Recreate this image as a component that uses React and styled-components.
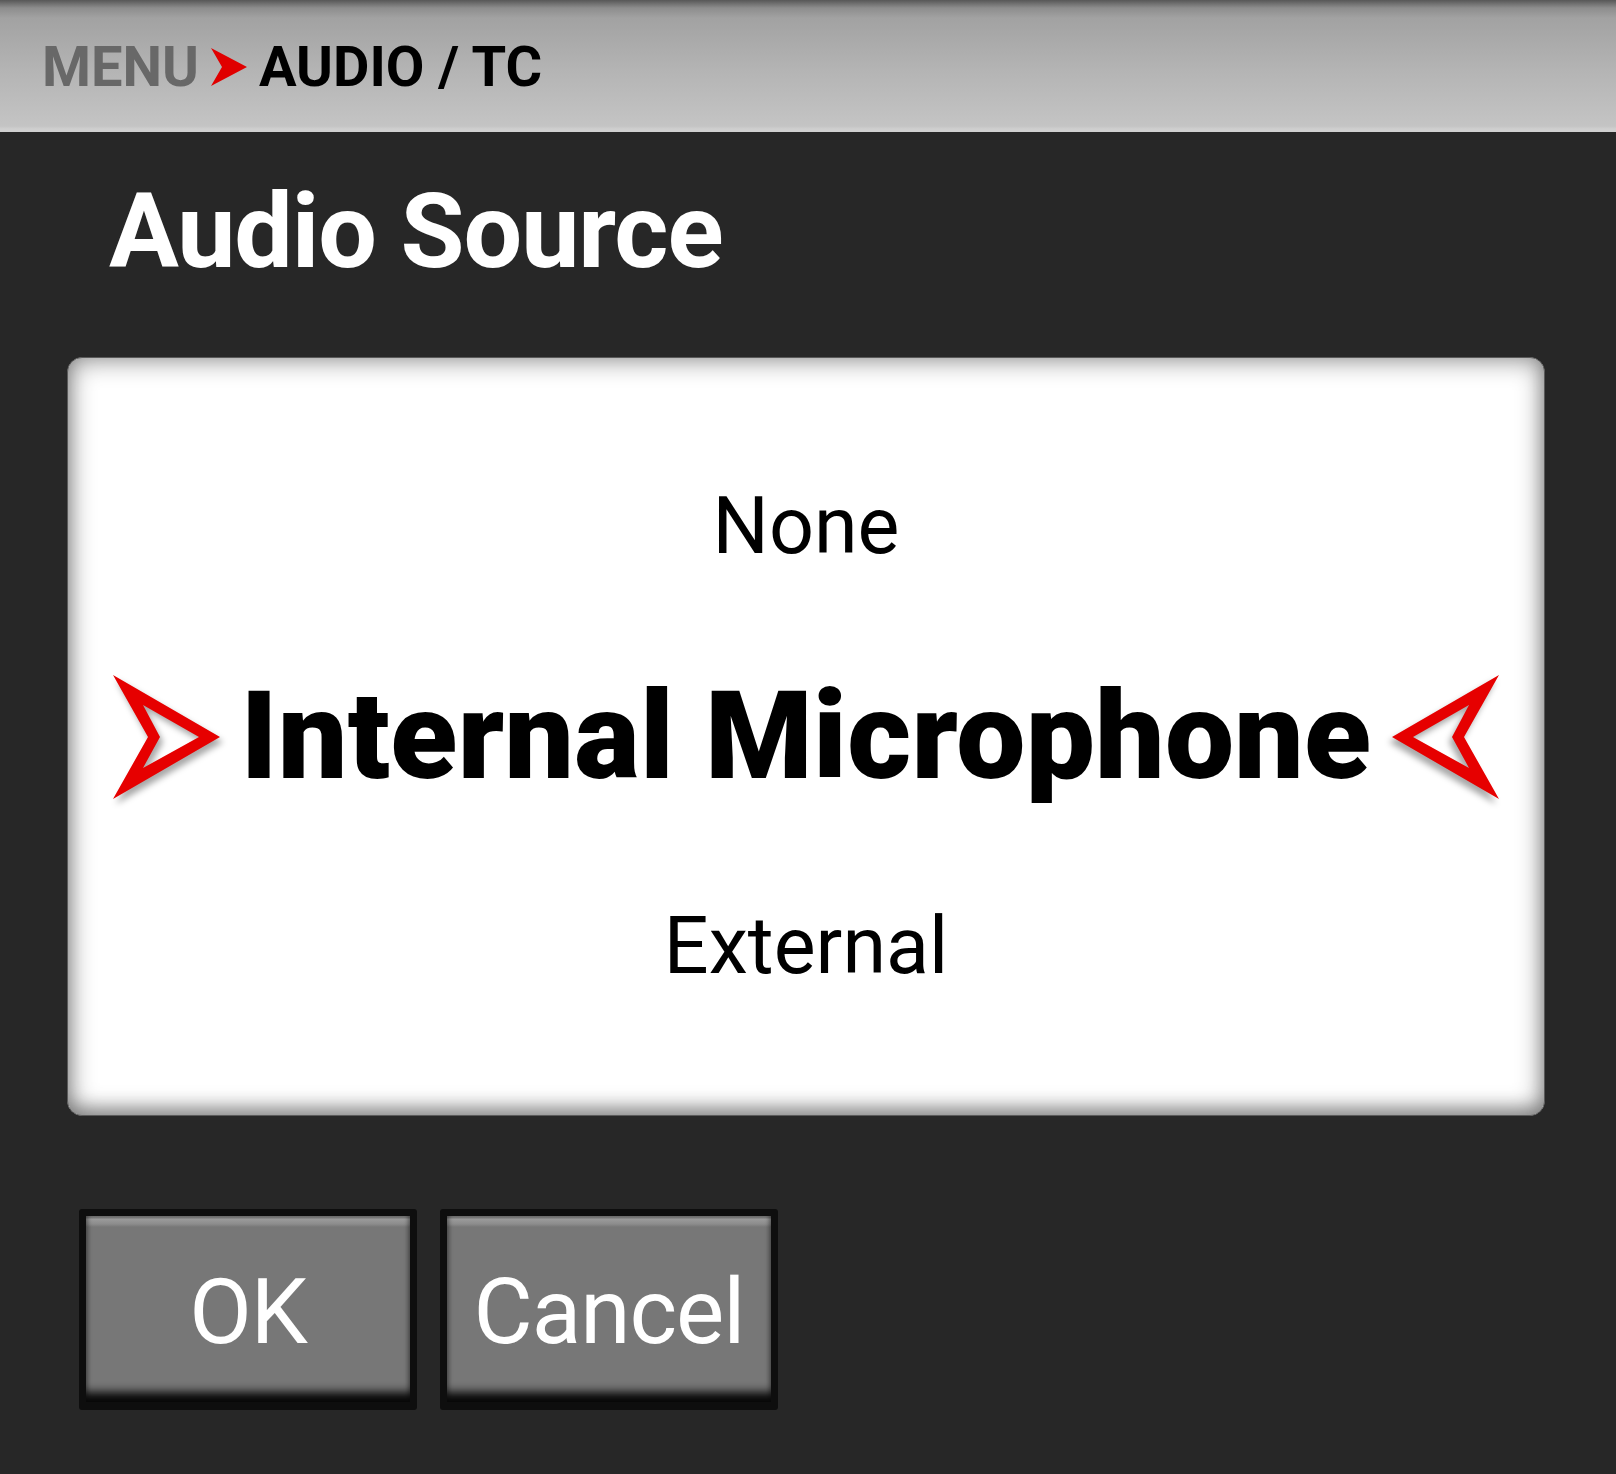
import React from "react";
import styled, { createGlobalStyle } from "styled-components";

const GlobalStyle = createGlobalStyle`
  html, body {
    margin: 0;
    padding: 0;
    background: #272727;
    font-family: Roboto, "Liberation Sans", sans-serif;
  }
`;

const Page = styled.div`
  width: 1616px;
  min-height: 1474px;
  display: flex;
  flex-direction: column;
  background: #272727;
`;

const Header = styled.header`
  height: 132px;
  box-sizing: border-box;
  display: flex;
  align-items: center;
  gap: 12px;
  padding: 2px 0 0 42px;
  background: linear-gradient(
    to bottom,
    #575757 0px,
    #8d8d8d 8px,
    #a2a2a2 18px,
    #b4b4b4 70px,
    #c4c4c4 126px,
    #cfcfcf 129px,
    #cfcfcf 132px
  );
  font-size: 56px;
  font-weight: 700;
  line-height: 1;
`;

const Crumb = styled.span`
  color: ${(p) => (p.$current ? "#000" : "#686868")};
`;

const CrumbArrow = styled.svg`
  width: 36px;
  height: 38px;
  flex: none;
`;

const Title = styled.h1`
  margin: 48px 0 0 109px;
  font-size: 104px;
  font-weight: 700;
  line-height: 1;
  color: #fff;
  letter-spacing: -1.1px;
`;

const Card = styled.div`
  margin: 73px 0 0 67px;
  width: 1478px;
  height: 759px;
  box-sizing: border-box;
  border-radius: 15px;
  border: 1px solid #5a5a5a;
  background: #fff;
  box-shadow: inset 0 0 24px 3px rgba(0, 0, 0, 0.42),
    inset 0 -8px 16px rgba(0, 0, 0, 0.22);
  display: flex;
  flex-direction: column;
  justify-content: center;
`;

const Option = styled.div`
  height: 210px;
  display: flex;
  align-items: center;
  justify-content: center;
  gap: 20px;
  color: #000;
  font-size: ${(p) => (p.$selected ? "123px" : "79px")};
  font-weight: ${(p) => (p.$selected ? 900 : 400)};
  letter-spacing: ${(p) => (p.$selected ? "0.3px" : "0")};
  line-height: 1;
`;

const Pointer = styled.svg`
  width: 108px;
  height: 124px;
  flex: none;
  filter: drop-shadow(3px 5px 3px rgba(0, 0, 0, 0.35));
  transform: ${(p) => (p.$flip ? "scaleX(-1)" : "none")};
`;

const Actions = styled.div`
  display: flex;
  gap: 23px;
  margin: 93px 0 0 79px;
`;

const Button = styled.button`
  width: 338px;
  height: 201px;
  box-sizing: border-box;
  padding: 6px 0 0;
  border: 7px solid #0e0e0e;
  border-bottom-width: 8px;
  border-radius: 3px;
  background: linear-gradient(
    to bottom,
    #777 0px,
    #7a7a7a 2px,
    #9b9b9b 3px,
    #8c8c8c 8px,
    #777 11px,
    #777 100%
  );
  box-shadow: inset 0 -16px 10px -6px #080808,
    inset 4px 0 4px -2px rgba(0, 0, 0, 0.35),
    inset -4px 0 4px -2px rgba(0, 0, 0, 0.35);
  color: #fff;
  font-family: Roboto, "Liberation Sans", sans-serif;
  font-size: 91px;
  font-weight: 400;
  line-height: 1;
  letter-spacing: -1px;
  cursor: pointer;
`;

const ArrowShape = () => (
  <path
    fillRule="evenodd"
    d="M0 0 L107 62 L0 124 L35 62 Z M30 30 L86 62 L30 93 L47 62 Z"
    fill="#e60000"
  />
);

const options = ["None", "Internal Microphone", "External"];
const selected = 1;

export default function App() {
  return (
    <Page>
      <GlobalStyle />
      <Header>
        <Crumb>MENU</Crumb>
        <CrumbArrow viewBox="0 0 36 38">
          <path d="M0 0 L36 19 L0 38 L11 19 Z" fill="#e00000" />
        </CrumbArrow>
        <Crumb $current>AUDIO / TC</Crumb>
      </Header>

      <Title>Audio Source</Title>

      <Card>
        {options.map((opt, i) => (
          <Option key={opt} $selected={i === selected}>
            {i === selected && (
              <Pointer viewBox="0 0 108 124">
                <ArrowShape />
              </Pointer>
            )}
            <span>{opt}</span>
            {i === selected && (
              <Pointer viewBox="0 0 108 124" $flip>
                <ArrowShape />
              </Pointer>
            )}
          </Option>
        ))}
      </Card>

      <Actions>
        <Button type="button">OK</Button>
        <Button type="button">Cancel</Button>
      </Actions>
    </Page>
  );
}
